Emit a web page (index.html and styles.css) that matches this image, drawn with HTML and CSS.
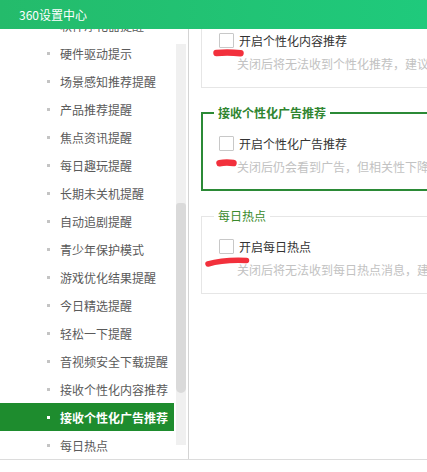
FILE: index.html
```html
<!DOCTYPE html>
<html lang="zh-CN">
<head>
<meta charset="utf-8">
<title>360设置中心</title>
<link rel="stylesheet" href="styles.css">
</head>
<body>
<div class="titlebar">360设置中心</div>
<div class="main">
  <aside class="sidebar">
    <ul class="menu">
      <li>软件净化器提醒</li>
      <li>硬件驱动提示</li>
      <li>场景感知推荐提醒</li>
      <li>产品推荐提醒</li>
      <li>焦点资讯提醒</li>
      <li>每日趣玩提醒</li>
      <li>长期未关机提醒</li>
      <li>自动追剧提醒</li>
      <li>青少年保护模式</li>
      <li>游戏优化结果提醒</li>
      <li>今日精选提醒</li>
      <li>轻松一下提醒</li>
      <li>音视频安全下载提醒</li>
      <li>接收个性化内容推荐</li>
      <li class="active">接收个性化广告推荐</li>
      <li>每日热点</li>
    </ul>
    <div class="scrollbar"><div class="thumb"></div></div>
  </aside>
  <section class="content">
    <div class="cards">
      <fieldset class="card">
        <legend>接收个性化内容推荐</legend>
        <label class="check"><span class="box"></span>开启个性化内容推荐<svg class="mark mark1" width="31" height="8" viewBox="0 0 31 8"><path d="M3.5 4 Q15 3 27.5 4.2" /></svg></label>
        <p class="desc">关闭后将无法收到个性化推荐，建议开启</p>
      </fieldset>
      <fieldset class="card focus">
        <legend>接收个性化广告推荐</legend>
        <label class="check"><span class="box"></span>开启个性化广告推荐<svg class="mark mark2" width="21" height="8" viewBox="0 0 21 8"><path d="M3.5 4.2 Q10 3 17.5 4" /></svg></label>
        <p class="desc">关闭后仍会看到广告，但相关性下降</p>
      </fieldset>
      <fieldset class="card">
        <legend>每日热点</legend>
        <label class="check"><span class="box"></span>开启每日热点<svg class="mark mark3" width="45" height="10" viewBox="0 0 45 10"><path d="M3 7 Q18 2.5 41.5 3.5" /></svg></label>
        <p class="desc">关闭后将无法收到每日热点消息，建议开启</p>
      </fieldset>
    </div>
  </section>
</div>
</body>
</html>
```

FILE: styles.css
```css
html, body {
  margin: 0;
  padding: 0;
  background: #fff;
}
body {
  width: 427px;
  height: 472px;
  overflow: hidden;
  font-family: "Noto Sans CJK SC", "Microsoft YaHei", sans-serif;
  font-size: 12px;
}
.titlebar {
  height: 29px;
  line-height: 29px;
  padding-left: 19px;
  color: #fff;
  background: linear-gradient(to right, #24bb6b, #1fca7c);
}
.main {
  display: flex;
  height: 430px;
  border-bottom: 1px solid #dcdcdc;
  overflow: hidden;
}
.sidebar {
  display: flex;
  flex: none;
  width: 188px;
  border-right: 1px solid #d4d4d4;
}
.menu {
  list-style: none;
  margin: -18px 0 0;
  padding: 0;
  width: 174px;
  flex: none;
}
.menu li {
  display: flex;
  align-items: center;
  height: 28px;
  padding-left: 47px;
  color: #5a5a5a;
  white-space: nowrap;
}
.menu li::before {
  content: "";
  flex: none;
  width: 3px;
  height: 3px;
  margin-right: 10px;
  background: #c4c4c4;
}
.menu li.active {
  background: #1e8c2e;
  color: #fff;
  font-weight: bold;
}
.menu li.active::before {
  background: #fff;
}
.scrollbar {
  flex: none;
  width: 10px;
  margin: 15px 2px 14px;
  background: #f0f0f0;
}
.thumb {
  margin-top: 159px;
  height: 190px;
  background: #dadada;
  border-radius: 3px 3px 5px 5px;
}
.content {
  flex: 1;
  min-width: 0;
  overflow: hidden;
}
.cards {
  margin-top: -27px;
  padding-left: 12px;
}
.card {
  width: 400px;
  margin: 0 0 17px;
  padding: 0 17px 14px;
  border: 1px solid #e6e6e6;
  min-width: 0;
}
.card legend {
  margin-left: -5px;
  padding: 0 4px;
  line-height: 16px;
  color: #3a8a2c;
}
.card.focus {
  border: 2px solid #2b8a36;
  padding: 0 17px 13px 16px;
}
.card.focus legend {
  font-weight: bold;
  color: #2f8530;
}
.check {
  position: relative;
  display: flex;
  align-items: center;
  height: 18px;
  margin-top: 13px;
  color: #333;
}
.box {
  flex: none;
  width: 13px;
  height: 13px;
  margin-right: 5px;
  border: 1px solid #c8c8c8;
  border-radius: 1px;
  background: #fff;
}
.desc {
  margin: 6px 0 0;
  padding-left: 18px;
  line-height: 18px;
  color: #c2c2c2;
  white-space: nowrap;
}
.mark {
  position: absolute;
  overflow: visible;
}
.mark path {
  fill: none;
  stroke: #f2303c;
  stroke-width: 6.5;
  stroke-linecap: round;
}
.mark1 {
  left: -6px;
  top: 18px;
}
.mark2 {
  left: -3px;
  top: 25px;
}
.mark3 {
  left: -14px;
  top: 20px;
}
.mark3 path {
  stroke-width: 5.5;
}
```
